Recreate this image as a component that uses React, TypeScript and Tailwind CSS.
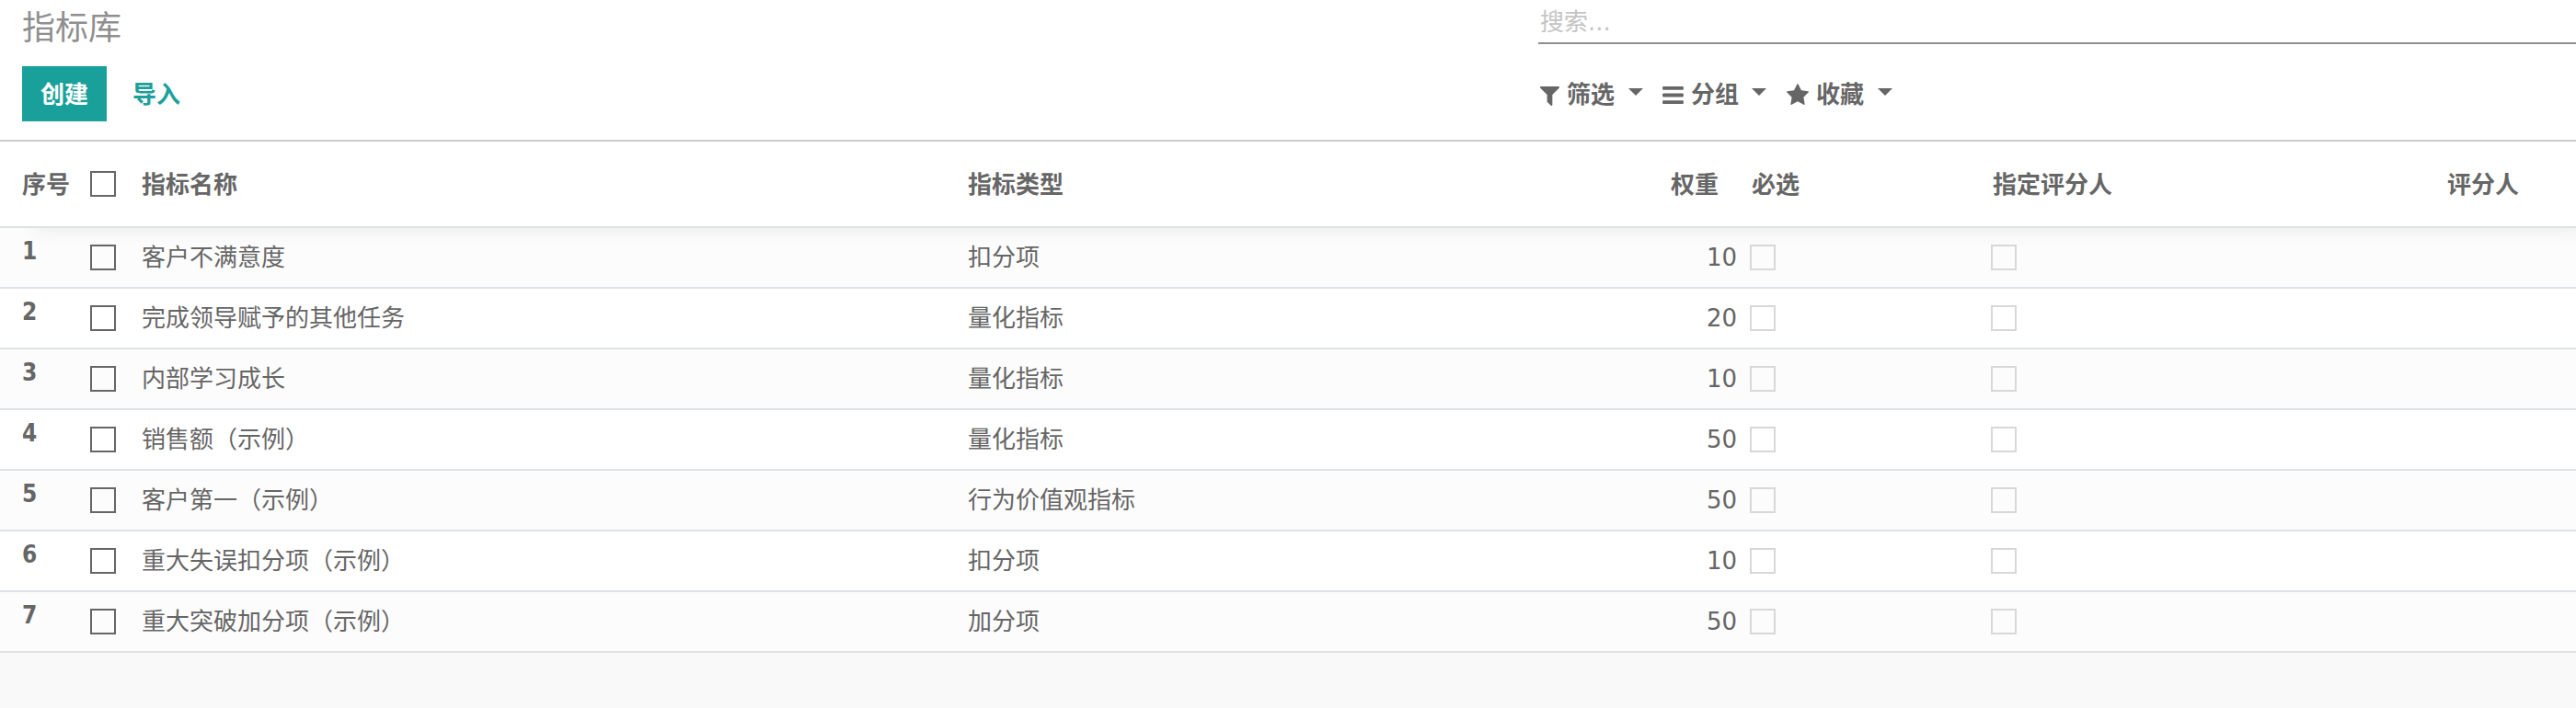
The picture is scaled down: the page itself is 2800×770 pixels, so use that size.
type Row = { name: string; type: string; weight: number };

const rows: Row[] = [
  { name: "客户不满意度", type: "扣分项", weight: 10 },
  { name: "完成领导赋予的其他任务", type: "量化指标", weight: 20 },
  { name: "内部学习成长", type: "量化指标", weight: 10 },
  { name: "销售额（示例）", type: "量化指标", weight: 50 },
  { name: "客户第一（示例）", type: "行为价值观指标", weight: 50 },
  { name: "重大失误扣分项（示例）", type: "扣分项", weight: 10 },
  { name: "重大突破加分项（示例）", type: "加分项", weight: 50 },
];

const columns =
  "grid grid-cols-[98px_56px_898px_836px_14px_262px_496px_140px] items-center";

function Box({ muted = false }: { muted?: boolean }) {
  return (
    <span
      role="checkbox"
      aria-checked="false"
      className={
        muted
          ? "block size-7 border-2 border-[#d8d8d8]"
          : "block size-7 border-2 border-[#666666]"
      }
    />
  );
}

function Caret() {
  return (
    <svg viewBox="0 0 16 8" className="h-2 w-4" fill="currentColor">
      <path d="M0 0h16l-8 8z" />
    </svg>
  );
}

function FilterIcon() {
  return (
    <svg viewBox="192 256 1408 1408" className="mt-[2px] size-[21px]" fill="currentColor">
      <path d="M1595 295q17 41-14 70l-493 493v742q0 42-39 59-13 5-25 5-27 0-45-19l-256-256q-19-19-19-45v-486l-493-493q-31-29-14-70 17-39 59-39h1280q42 0 59 39z" />
    </svg>
  );
}

function BarsIcon() {
  return (
    <svg viewBox="128 256 1536 1280" className="h-[19px] w-[23px]" fill="currentColor">
      <path d="M1664 1344v128q0 26-19 45t-45 19h-1408q-26 0-45-19t-19-45v-128q0-26 19-45t45-19h1408q26 0 45 19t19 45zm0-512v128q0 26-19 45t-45 19h-1408q-26 0-45-19t-19-45v-128q0-26 19-45t45-19h1408q26 0 45 19t19 45zm0-512v128q0 26-19 45t-45 19h-1408q-26 0-45-19t-19-45v-128q0-26 19-45t45-19h1408q26 0 45 19t19 45z" />
    </svg>
  );
}

function StarIcon() {
  return (
    <svg viewBox="64 32 1664 1587" className="-mt-px h-[23px] w-[24px]" fill="currentColor">
      <path d="M1728 647q0 22-26 48l-363 354 86 500q1 7 1 20 0 21-10.5 35.5t-30.5 14.5q-19 0-40-12l-449-236-449 236q-22 12-40 12-21 0-31.5-14.5t-10.5-35.5q0-6 2-20l86-500-364-354q-25-27-25-48 0-37 56-46l502-73 225-455q19-41 49-41t49 41l225 455 502 73q56 9 56 46z" />
    </svg>
  );
}

export default function App() {
  return (
    <div className="h-[770px] w-[2800px] overflow-hidden bg-[#f9f9f9] font-['DejaVu_Sans','Noto_Sans_CJK_SC',sans-serif] text-[26px] leading-[38px] text-[#666666]">
      <header className="flex h-[154px] border-b-2 border-[#cccccc] bg-white">
        <div className="flex w-[1672px] flex-col pl-6">
          <h1 className="mt-1 h-[68px] text-[36px] leading-[54px] text-[#8f8f8f]">指标库</h1>
          <div className="flex h-[60px] items-center font-bold">
            <button className="h-[60px] w-[92px] bg-[#1aa09b] pt-px text-white">创建</button>
            <button className="ml-7 pt-px text-[#1aa09b]">导入</button>
          </div>
        </div>
        <div className="flex-1">
          <div className="h-12 border-b-2 border-[#8f8f8f] pl-0.5 pt-[5px] text-[#c4c4c4]">
            搜索...
          </div>
          <nav className="mt-9 flex h-[38px] items-center pl-0.5 font-bold">
            <FilterIcon />
            <span className="ml-2 mr-[15px]">筛选</span>
            <span className="-mt-1.5"><Caret /></span>
            <span className="w-[21px]" />
            <BarsIcon />
            <span className="ml-2 mr-[14px]">分组</span>
            <span className="-mt-1.5"><Caret /></span>
            <span className="w-[22px]" />
            <StarIcon />
            <span className="ml-2 mr-[15px]">收藏</span>
            <span className="-mt-1.5"><Caret /></span>
          </nav>
        </div>
      </header>

      <div className={`${columns} relative z-10 h-[94px] border-b-2 border-[#dee2e6] bg-white pt-px font-bold shadow-[24px_10px_24px_-12px_rgba(0,0,0,0.1)]`}>
        <span className="pl-6">序号</span>
        <span className="-mt-px"><Box /></span>
        <span>指标名称</span>
        <span className="flex justify-between pr-5">
          <span>指标类型</span>
          <span>权重</span>
        </span>
        <span />
        <span className="pl-0.5">必选</span>
        <span className="pl-0.5">指定评分人</span>
        <span>评分人</span>
      </div>

      {rows.map((row, i) => (
        <div
          key={row.name}
          className={`${columns} h-[66px] border-b-2 border-[#dee2e6] odd:bg-[#fcfcfc] even:bg-white`}
        >
          <span className="self-start pl-6 pt-1.5 font-['DejaVu_Sans_Condensed',sans-serif] font-bold">
            {i + 1}
          </span>
          <Box />
          <span>{row.name}</span>
          <span className="flex justify-between">
            <span>{row.type}</span>
            <span>{row.weight}</span>
          </span>
          <span />
          <Box muted />
          <Box muted />
          <span />
        </div>
      ))}
    </div>
  );
}
